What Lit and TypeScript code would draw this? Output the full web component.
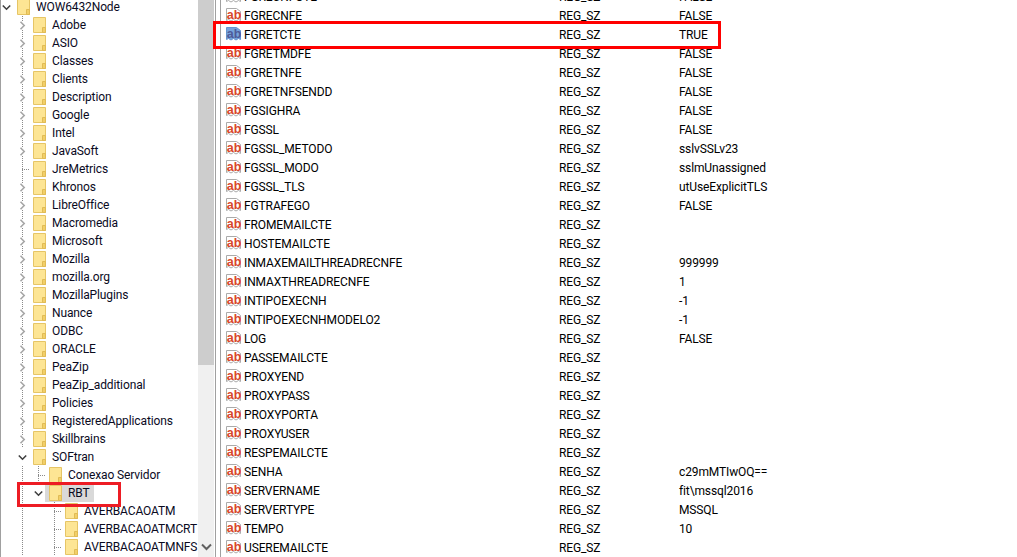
import { LitElement, html, css, svg } from "lit";
import { customElement } from "lit/decorators.js";

type Tw = "open" | "closed" | "leaf";
interface Node { t: string; guides: boolean[]; tw: Tw; sel?: boolean }

const top = ["Adobe:c","ASIO:c","Classes:c","Clients:c","Description:c","Google:c","Intel:c","JavaSoft:c","JreMetrics:l","Khronos:c","LibreOffice:c","Macromedia:c","Microsoft:c","Mozilla:c","mozilla.org:c","MozillaPlugins:c","Nuance:c","ODBC:c","ORACLE:c","PeaZip:c","PeaZip_additional:c","Policies:c","RegisteredApplications:c","Skillbrains:c"];

const tree: Node[] = [
  { t: "WOW6432Node", guides: [], tw: "open" },
  ...top.map((s) => {
    const [t, k] = s.split(":");
    return { t, guides: [false], tw: (k === "c" ? "closed" : "leaf") as Tw };
  }),
  { t: "SOFtran", guides: [false], tw: "open" },
  { t: "Conexao Servidor", guides: [false, true], tw: "leaf" },
  { t: "RBT", guides: [false, true], tw: "open", sel: true },
  { t: "AVERBACAOATM", guides: [false, true, false], tw: "leaf" },
  { t: "AVERBACAOATMCRT", guides: [false, true, false], tw: "leaf" },
  { t: "AVERBACAOATMNFS", guides: [false, true, false], tw: "leaf" },
];

const values: [string, string][] = [
  ["FGRECNFOTE", "FALSE"], ["FGRECNFE", "FALSE"], ["FGRETCTE", "TRUE"], ["FGRETMDFE", "FALSE"],
  ["FGRETNFE", "FALSE"], ["FGRETNFSENDD", "FALSE"], ["FGSIGHRA", "FALSE"], ["FGSSL", "FALSE"],
  ["FGSSL_METODO", "sslvSSLv23"], ["FGSSL_MODO", "sslmUnassigned"], ["FGSSL_TLS", "utUseExplicitTLS"],
  ["FGTRAFEGO", "FALSE"], ["FROMEMAILCTE", ""], ["HOSTEMAILCTE", ""],
  ["INMAXEMAILTHREADRECNFE", "999999"], ["INMAXTHREADRECNFE", "1"], ["INTIPOEXECNH", "-1"],
  ["INTIPOEXECNHMODELO2", "-1"], ["LOG", "FALSE"], ["PASSEMAILCTE", ""], ["PROXYEND", ""],
  ["PROXYPASS", ""], ["PROXYPORTA", ""], ["PROXYUSER", ""], ["RESPEMAILCTE", ""],
  ["SENHA", "c29mMTIwOQ=="], ["SERVERNAME", "fit\\mssql2016"], ["SERVERTYPE", "MSSQL"],
  ["TEMPO", "10"], ["USEREMAILCTE", ""],
];

const chevronRight = svg`<svg class="chev" width="9" height="9" viewBox="0 0 9 9"><path d="M2.5 .8 6.2 4.5 2.5 8.2" fill="none" stroke="#a6a6a6" stroke-width="1.6"/></svg>`;
const chevronDown = svg`<svg class="chev" width="9" height="9" viewBox="0 0 9 9"><path d="M.8 2.5 4.5 6.2 8.2 2.5" fill="none" stroke="#404040" stroke-width="1.6"/></svg>`;
const folder = svg`<svg width="13" height="16" viewBox="0 0 13 16"><path d="M.5.5H12.5V15.5H.5Z" fill="#fde594" stroke="#e6c566"/><path d="M9.5 15.5V10.5H12.5V15.5Z" fill="#f2cf68" stroke="#e0bb55"/></svg>`;

function abIcon(sel: boolean) {
  const fill = sel ? "#76a3dc" : "#fff";
  const line = sel ? "#6494d0" : "#ababab";
  const ink = sel ? "#4e5a98" : "#d8462a";
  return svg`<svg class="ab" width="15" height="14" viewBox="0 0 15 14"><path d="M.5.5H10.5L14.5 3.5V12.5L12.5 11.5 10 13 7.5 11.5 5 13 2.5 11.5.5 12.5Z" fill="${fill}" stroke="${line}"/><text x="8" y="11" text-anchor="middle" font-family="Liberation Sans, sans-serif" font-weight="700" font-size="12.5" fill="${ink}">ab</text></svg>`;
}

@customElement("app-root")
export class AppRoot extends LitElement {
  static styles = css`
    :host {
      display: block;
      position: relative;
      width: 1017px;
      height: 557px;
      overflow: hidden;
      background: #fff;
      font-family: "Roboto", "Noto Sans", sans-serif;
      font-size: 12px;
      letter-spacing: -0.12px;
      color: #000;
    }
    .shell { display: flex; height: 557px; }
    .tree {
      width: 197px;
      flex: none;
      overflow: hidden;
      border-left: 1px solid #a0a0a0;
      white-space: nowrap;
    }
    .tree-inner { margin: -2px 0 0 -3px; }
    .row { display: flex; height: 18px; align-items: stretch; }
    .cell { width: 16px; flex: none; display: flex; align-items: center; justify-content: center; }
    .guide {
      background-image: linear-gradient(#8a8a8a 50%, transparent 50%);
      background-size: 1px 2px;
      background-repeat: repeat-y;
      background-position: 8px 0;
    }
    .connector {
      background-image:
        linear-gradient(#8a8a8a 50%, transparent 50%),
        repeating-linear-gradient(90deg, #8a8a8a 0 1px, transparent 1px 2px);
      background-size: 1px 2px, 8px 1px;
      background-repeat: repeat-y, no-repeat;
      background-position: 8px 0, 8px 9px;
    }
    .chev { background: #fff; }
    .item { display: flex; align-items: center; padding-left: 3px; height: 18px; }
    .item.sel { background: #d9d9d9; margin-left: -1px; padding-left: 4px; }
    .item svg { flex: none; }
    .label { margin-left: 6px; padding-right: 4px; line-height: 18px; color: #0a0a1e; }
    .scroll {
      width: 16px;
      flex: none;
      background: #f0f0f0;
      display: flex;
      flex-direction: column;
      justify-content: space-between;
      align-items: center;
    }
    .thumb { width: 16px; height: 365px; background: #cdcdcd; }
    .down { height: 14px; display: flex; align-items: flex-start; }
    .gutter {
      width: 4px;
      flex: none;
      margin-left: 1px;
      border-left: 1px solid #a0a0a0;
      border-right: 1px solid #a0a0a0;
      background: #fff;
    }
    .list { flex: 1; min-width: 0; overflow: hidden; }
    .list-inner { margin-top: -12px; }
    .vrow { display: grid; grid-template-columns: 338px 120px 1fr; height: 19px; align-items: center; line-height: 19px; white-space: nowrap; }
    .name { display: flex; align-items: center; gap: 3px; padding-left: 5px; }
    .ab { flex: none; margin-bottom: 3px; }
    .mark { position: absolute; border: 3px solid #f00; box-sizing: border-box; pointer-events: none; }
    .mark-value { left: 213px; top: 21px; width: 508px; height: 28px; }
    .mark-key { left: 17px; top: 482px; width: 104px; height: 25px; border-color: #ed1c24; }
  `;

  render() {
    return html`
      <div class="shell">
        <div class="tree">
          <div class="tree-inner">
            ${tree.map(
              (n) => html`<div class="row">
                ${n.guides.map((g) => html`<span class="cell ${g ? "guide" : ""}"></span>`)}
                <span class="cell ${n.tw === "leaf" ? "connector" : n.guides.length && n.tw === "closed" ? "guide" : ""}">
                  ${n.tw === "open" ? chevronDown : n.tw === "closed" ? chevronRight : ""}
                </span>
                <span class="item ${n.sel ? "sel" : ""}">${folder}<span class="label">${n.t}</span></span>
              </div>`
            )}
          </div>
        </div>
        <div class="scroll">
          <div class="thumb"></div>
          <div class="down">${svg`<svg width="11" height="8" viewBox="0 0 11 8"><path d="M1 1.5 5.5 6 10 1.5" fill="none" stroke="#606060" stroke-width="2"/></svg>`}</div>
        </div>
        <div class="gutter"></div>
        <div class="list">
          <div class="list-inner">
            ${values.map(
              ([k, v]) => html`<div class="vrow">
                <span class="name">${abIcon(k === "FGRETCTE")}<span>${k}</span></span>
                <span>REG_SZ</span>
                <span>${v}</span>
              </div>`
            )}
          </div>
        </div>
      </div>
      <div class="mark mark-value"></div>
      <div class="mark mark-key"></div>
    `;
  }
}
